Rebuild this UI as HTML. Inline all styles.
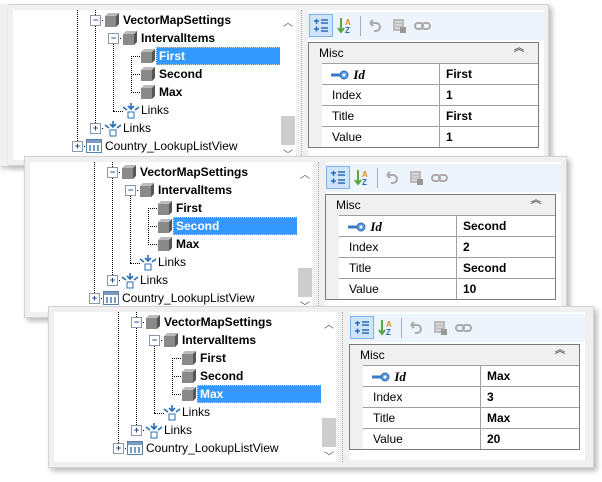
<!DOCTYPE html>
<html><head><meta charset="utf-8"><style>
body{margin:0;width:602px;height:482px;background:#fff;position:relative;overflow:hidden;font-family:"Liberation Sans",Tahoma,sans-serif;font-size:12px;color:#000}
.p{position:absolute;height:160px;background:#f0f0f0;border:1px solid #d4d4d4;box-shadow:3px 3px 5px rgba(0,0,0,.28)}
.tree{position:absolute;left:5px;top:5px;width:283px;height:150px;background:#fff;overflow:hidden}
.a{position:absolute}
.sb{position:absolute;left:267px;top:0;width:16px;height:150px;background:#fff}
.th{position:absolute;left:1px;top:106px;width:14px;height:29px;background:#cdcdcd}
.chev{position:absolute;left:3px;font-size:10px;color:#555}
.vl{position:absolute;border-left:1px dotted #000;width:0}
.hl{position:absolute;border-top:1px dotted #000;height:0}
.ex{position:absolute;width:9px;height:9px;border:1px solid #8a9aac;background:#fff;font-size:9px;line-height:9px;text-align:center;color:#2a4a8a;font-weight:bold}
.t{position:absolute;white-space:nowrap;line-height:16px}
.b{font-weight:bold}
.sel{background:#3399ff;color:#fff;border:1px dotted #bcd;}
.split{position:absolute;left:293px;top:5px;height:150px;border-left:1px dotted #aaa}
.rw{position:absolute;left:300px;top:5px;width:236px;height:148px;background:#fff}
.tb{position:absolute;left:0;top:2px;width:236px;height:28px;background:#eef4fb}
.grid{position:absolute;left:0;top:32px;width:229px;height:104px;border:1px solid #7a7a7a;background:#f0f0f0}
.row{position:absolute;left:13px;width:216px;height:20px;background:#fff;border-top:1px solid #a0a0a0}
.c1{position:absolute;left:10px;top:3px}
.c2{position:absolute;left:117px;top:0;height:20px;border-left:1px solid #a0a0a0;padding-left:6px;line-height:20px;font-weight:bold}
</style></head><body>

<div class="a" style="left:0;top:4px;width:12px;height:162px;background:#f0f0f0;box-shadow:0 3px 5px rgba(0,0,0,.2)"></div>

<div class="p" style="left:8px;top:4px;width:540px;border-left:none">
 <div class="tree">
  <div class="vl" style="left:64px;top:0;height:137px"></div>
  <div class="vl" style="left:82px;top:0;height:119px"></div>
  <div class="vl" style="left:100px;top:34px;height:67px"></div>
  <div class="hl" style="left:100px;top:101px;width:10px"></div>
  <div class="vl" style="left:118px;top:46px;height:37px"></div>
  <div class="hl" style="left:118px;top:46px;width:9px"></div>
  <div class="hl" style="left:118px;top:64px;width:9px"></div>
  <div class="hl" style="left:118px;top:82px;width:9px"></div>
  <div class="hl" style="left:82px;top:10px;width:8px"></div>
  <div class="hl" style="left:100px;top:28px;width:8px"></div>
  <div class="hl" style="left:82px;top:118px;width:8px"></div>
  <div class="hl" style="left:64px;top:136px;width:8px"></div>
  <div class="ex" style="left:77px;top:5px">−</div>
  <div class="ex" style="left:95px;top:23px">−</div>
  <div class="ex" style="left:77px;top:113px">+</div>
  <div class="ex" style="left:59px;top:131px">+</div>
  <svg class="a" style="left:91px;top:2px" width="16" height="16"><path d="M1 4 L4 1 H15 L12 4Z" fill="#bbb"/><rect x="1" y="4" width="11" height="11" fill="#8a8a8a"/><path d="M12 4 L15 1 V12 L12 15Z" fill="#555"/></svg>
  <svg class="a" style="left:109px;top:20px" width="16" height="16"><path d="M1 4 L4 1 H15 L12 4Z" fill="#bbb"/><rect x="1" y="4" width="11" height="11" fill="#8a8a8a"/><path d="M12 4 L15 1 V12 L12 15Z" fill="#555"/></svg>
  <svg class="a" style="left:127px;top:38px" width="16" height="16"><path d="M1 4 L4 1 H15 L12 4Z" fill="#bbb"/><rect x="1" y="4" width="11" height="11" fill="#8a8a8a"/><path d="M12 4 L15 1 V12 L12 15Z" fill="#555"/></svg>
  <svg class="a" style="left:127px;top:56px" width="16" height="16"><path d="M1 4 L4 1 H15 L12 4Z" fill="#bbb"/><rect x="1" y="4" width="11" height="11" fill="#8a8a8a"/><path d="M12 4 L15 1 V12 L12 15Z" fill="#555"/></svg>
  <svg class="a" style="left:127px;top:74px" width="16" height="16"><path d="M1 4 L4 1 H15 L12 4Z" fill="#bbb"/><rect x="1" y="4" width="11" height="11" fill="#8a8a8a"/><path d="M12 4 L15 1 V12 L12 15Z" fill="#555"/></svg>
  <svg class="a" style="left:109px;top:92px" width="18" height="18"><path d="M9 1V7M6 4L9 7L12 4M1 5L5 8M17 5L13 8" stroke="#2a6db5" stroke-width="1.6" fill="none"/><rect x="6" y="10" width="6" height="6" fill="#fff" stroke="#2a6db5"/></svg>
  <svg class="a" style="left:91px;top:110px" width="18" height="18"><path d="M9 1V7M6 4L9 7L12 4M1 5L5 8M17 5L13 8" stroke="#2a6db5" stroke-width="1.6" fill="none"/><rect x="6" y="10" width="6" height="6" fill="#fff" stroke="#2a6db5"/></svg>
  <svg class="a" style="left:73px;top:129px" width="16" height="14"><rect x="0.5" y="0.5" width="15" height="13" fill="#fff" stroke="#5a7fa8"/><rect x="1" y="1" width="14" height="3" fill="#7a9cc2"/><path d="M4 6V12M8 6V12M12 6V12" stroke="#7a9cc2" stroke-width="2"/></svg>
  <div class="t b" style="left:110px;top:2px">VectorMapSettings</div>
  <div class="t b" style="left:128px;top:20px">IntervalItems</div>
  <div class="t b sel" style="left:143px;top:37px;width:121px;padding-left:2px">First</div>
  <div class="t b" style="left:146px;top:56px">Second</div>
  <div class="t b" style="left:146px;top:74px">Max</div>
  <div class="t" style="left:128px;top:92px">Links</div>
  <div class="t" style="left:110px;top:110px">Links</div>
  <div class="t" style="left:92px;top:128px">Country_LookupListView</div>
  <div class="sb"><div class="chev" style="top:4px">︿</div><div class="th"></div><div class="chev" style="top:136px">﹀</div></div>
 </div>
 <div class="split"></div>
 <div class="rw">
  <div class="tb">
   <div class="a" style="left:1px;top:2px;width:22px;height:21px;background:#cfe3fb;border:1px solid #7fb0e8"></div>
   <svg class="a" style="left:5px;top:6px" width="16" height="16"><path d="M1 3H6M3.5 1V6M1 11H6M3.5 8.5V13.5M8 2H15M8 5H15M8 10H15M8 13H15" stroke="#2a6db5" stroke-width="1.4"/></svg>
   <svg class="a" style="left:29px;top:5px" width="16" height="18"><path d="M4 1V14M1 11L4 15L7 11" stroke="#5aa545" stroke-width="2" fill="none"/><text x="8" y="8" font-size="8" font-weight="bold" fill="#e08a20" font-family="Liberation Sans">A</text><text x="8" y="16" font-size="8" font-weight="bold" fill="#2a6db5" font-family="Liberation Sans">Z</text></svg>
   <div class="a" style="left:52px;top:4px;height:20px;border-left:1px solid #aab"></div>
   <svg class="a" style="left:60px;top:6px" width="14" height="16"><path d="M2 5H8A4 4 0 0 1 8 13H6M2 5L5 2M2 5L5 8" stroke="#aaa" stroke-width="2" fill="none"/></svg>
   <svg class="a" style="left:84px;top:6px" width="15" height="16"><rect x="1" y="1" width="11" height="12" fill="#bbb"/><path d="M3 4H10M3 7H10M3 10H10" stroke="#eee"/><rect x="8" y="9" width="6" height="6" fill="#999"/></svg>
   <svg class="a" style="left:106px;top:9px" width="17" height="10"><rect x="1" y="2" width="8" height="6" rx="3" fill="none" stroke="#aaa" stroke-width="2"/><rect x="8" y="2" width="8" height="6" rx="3" fill="none" stroke="#aaa" stroke-width="2"/></svg>
  </div>
  <div class="grid">
   <div class="a" style="left:0;top:0;width:229px;height:20px;background:#f0f0f0"><span class="c1" style="left:10px">Misc</span><span class="a" style="left:205px;top:2px;font-size:10px;color:#666;font-weight:bold;line-height:7px">︽</span></div>
   <div class="row" style="top:20px"><span class="c1" style="left:8px"><svg width="20" height="10" style="vertical-align:-1px"><path d="M1 5H12" stroke="#3a7ac8" stroke-width="3"/><circle cx="14" cy="5" r="4" fill="#5a9ae0" stroke="#2a6db5"/><circle cx="14" cy="5" r="1.5" fill="#fff"/></svg> <b><i style="font-family:'Liberation Serif',serif;font-size:13px">Id</i></b></span><span class="c2">First</span></div>
   <div class="row" style="top:41px"><span class="c1">Index</span><span class="c2">1</span></div>
   <div class="row" style="top:62px"><span class="c1">Title</span><span class="c2">First</span></div>
   <div class="row" style="top:83px"><span class="c1">Value</span><span class="c2">1</span></div>
  </div>
 </div>
</div>

<div class="p" style="left:24px;top:156px;width:541px">
 <div class="tree">
  <div class="vl" style="left:64px;top:0;height:137px"></div>
  <div class="vl" style="left:82px;top:0;height:119px"></div>
  <div class="vl" style="left:100px;top:34px;height:67px"></div>
  <div class="hl" style="left:100px;top:101px;width:10px"></div>
  <div class="vl" style="left:118px;top:46px;height:37px"></div>
  <div class="hl" style="left:118px;top:46px;width:9px"></div>
  <div class="hl" style="left:118px;top:64px;width:9px"></div>
  <div class="hl" style="left:118px;top:82px;width:9px"></div>
  <div class="hl" style="left:82px;top:10px;width:8px"></div>
  <div class="hl" style="left:100px;top:28px;width:8px"></div>
  <div class="hl" style="left:82px;top:118px;width:8px"></div>
  <div class="hl" style="left:64px;top:136px;width:8px"></div>
  <div class="ex" style="left:77px;top:5px">−</div>
  <div class="ex" style="left:95px;top:23px">−</div>
  <div class="ex" style="left:77px;top:113px">+</div>
  <div class="ex" style="left:59px;top:131px">+</div>
  <svg class="a" style="left:91px;top:2px" width="16" height="16"><path d="M1 4 L4 1 H15 L12 4Z" fill="#bbb"/><rect x="1" y="4" width="11" height="11" fill="#8a8a8a"/><path d="M12 4 L15 1 V12 L12 15Z" fill="#555"/></svg>
  <svg class="a" style="left:109px;top:20px" width="16" height="16"><path d="M1 4 L4 1 H15 L12 4Z" fill="#bbb"/><rect x="1" y="4" width="11" height="11" fill="#8a8a8a"/><path d="M12 4 L15 1 V12 L12 15Z" fill="#555"/></svg>
  <svg class="a" style="left:127px;top:38px" width="16" height="16"><path d="M1 4 L4 1 H15 L12 4Z" fill="#bbb"/><rect x="1" y="4" width="11" height="11" fill="#8a8a8a"/><path d="M12 4 L15 1 V12 L12 15Z" fill="#555"/></svg>
  <svg class="a" style="left:127px;top:56px" width="16" height="16"><path d="M1 4 L4 1 H15 L12 4Z" fill="#bbb"/><rect x="1" y="4" width="11" height="11" fill="#8a8a8a"/><path d="M12 4 L15 1 V12 L12 15Z" fill="#555"/></svg>
  <svg class="a" style="left:127px;top:74px" width="16" height="16"><path d="M1 4 L4 1 H15 L12 4Z" fill="#bbb"/><rect x="1" y="4" width="11" height="11" fill="#8a8a8a"/><path d="M12 4 L15 1 V12 L12 15Z" fill="#555"/></svg>
  <svg class="a" style="left:109px;top:92px" width="18" height="18"><path d="M9 1V7M6 4L9 7L12 4M1 5L5 8M17 5L13 8" stroke="#2a6db5" stroke-width="1.6" fill="none"/><rect x="6" y="10" width="6" height="6" fill="#fff" stroke="#2a6db5"/></svg>
  <svg class="a" style="left:91px;top:110px" width="18" height="18"><path d="M9 1V7M6 4L9 7L12 4M1 5L5 8M17 5L13 8" stroke="#2a6db5" stroke-width="1.6" fill="none"/><rect x="6" y="10" width="6" height="6" fill="#fff" stroke="#2a6db5"/></svg>
  <svg class="a" style="left:73px;top:129px" width="16" height="14"><rect x="0.5" y="0.5" width="15" height="13" fill="#fff" stroke="#5a7fa8"/><rect x="1" y="1" width="14" height="3" fill="#7a9cc2"/><path d="M4 6V12M8 6V12M12 6V12" stroke="#7a9cc2" stroke-width="2"/></svg>
  <div class="t b" style="left:110px;top:2px">VectorMapSettings</div>
  <div class="t b" style="left:128px;top:20px">IntervalItems</div>
  <div class="t b" style="left:146px;top:38px">First</div>
  <div class="t b sel" style="left:143px;top:55px;width:121px;padding-left:2px">Second</div>
  <div class="t b" style="left:146px;top:74px">Max</div>
  <div class="t" style="left:128px;top:92px">Links</div>
  <div class="t" style="left:110px;top:110px">Links</div>
  <div class="t" style="left:92px;top:128px">Country_LookupListView</div>
  <div class="sb"><div class="chev" style="top:4px">︿</div><div class="th"></div><div class="chev" style="top:136px">﹀</div></div>
 </div>
 <div class="split"></div>
 <div class="rw">
  <div class="tb">
   <div class="a" style="left:1px;top:2px;width:22px;height:21px;background:#cfe3fb;border:1px solid #7fb0e8"></div>
   <svg class="a" style="left:5px;top:6px" width="16" height="16"><path d="M1 3H6M3.5 1V6M1 11H6M3.5 8.5V13.5M8 2H15M8 5H15M8 10H15M8 13H15" stroke="#2a6db5" stroke-width="1.4"/></svg>
   <svg class="a" style="left:29px;top:5px" width="16" height="18"><path d="M4 1V14M1 11L4 15L7 11" stroke="#5aa545" stroke-width="2" fill="none"/><text x="8" y="8" font-size="8" font-weight="bold" fill="#e08a20" font-family="Liberation Sans">A</text><text x="8" y="16" font-size="8" font-weight="bold" fill="#2a6db5" font-family="Liberation Sans">Z</text></svg>
   <div class="a" style="left:52px;top:4px;height:20px;border-left:1px solid #aab"></div>
   <svg class="a" style="left:60px;top:6px" width="14" height="16"><path d="M2 5H8A4 4 0 0 1 8 13H6M2 5L5 2M2 5L5 8" stroke="#aaa" stroke-width="2" fill="none"/></svg>
   <svg class="a" style="left:84px;top:6px" width="15" height="16"><rect x="1" y="1" width="11" height="12" fill="#bbb"/><path d="M3 4H10M3 7H10M3 10H10" stroke="#eee"/><rect x="8" y="9" width="6" height="6" fill="#999"/></svg>
   <svg class="a" style="left:106px;top:9px" width="17" height="10"><rect x="1" y="2" width="8" height="6" rx="3" fill="none" stroke="#aaa" stroke-width="2"/><rect x="8" y="2" width="8" height="6" rx="3" fill="none" stroke="#aaa" stroke-width="2"/></svg>
  </div>
  <div class="grid">
   <div class="a" style="left:0;top:0;width:229px;height:20px;background:#f0f0f0"><span class="c1" style="left:10px">Misc</span><span class="a" style="left:205px;top:2px;font-size:10px;color:#666;font-weight:bold;line-height:7px">︽</span></div>
   <div class="row" style="top:20px"><span class="c1" style="left:8px"><svg width="20" height="10" style="vertical-align:-1px"><path d="M1 5H12" stroke="#3a7ac8" stroke-width="3"/><circle cx="14" cy="5" r="4" fill="#5a9ae0" stroke="#2a6db5"/><circle cx="14" cy="5" r="1.5" fill="#fff"/></svg> <b><i style="font-family:'Liberation Serif',serif;font-size:13px">Id</i></b></span><span class="c2">Second</span></div>
   <div class="row" style="top:41px"><span class="c1">Index</span><span class="c2">2</span></div>
   <div class="row" style="top:62px"><span class="c1">Title</span><span class="c2">Second</span></div>
   <div class="row" style="top:83px"><span class="c1">Value</span><span class="c2">10</span></div>
  </div>
 </div>
</div>

<div class="p" style="left:48px;top:306px;width:544px">
 <div class="tree">
  <div class="vl" style="left:64px;top:0;height:137px"></div>
  <div class="vl" style="left:82px;top:0;height:119px"></div>
  <div class="vl" style="left:100px;top:34px;height:67px"></div>
  <div class="hl" style="left:100px;top:101px;width:10px"></div>
  <div class="vl" style="left:118px;top:46px;height:37px"></div>
  <div class="hl" style="left:118px;top:46px;width:9px"></div>
  <div class="hl" style="left:118px;top:64px;width:9px"></div>
  <div class="hl" style="left:118px;top:82px;width:9px"></div>
  <div class="hl" style="left:82px;top:10px;width:8px"></div>
  <div class="hl" style="left:100px;top:28px;width:8px"></div>
  <div class="hl" style="left:82px;top:118px;width:8px"></div>
  <div class="hl" style="left:64px;top:136px;width:8px"></div>
  <div class="ex" style="left:77px;top:5px">−</div>
  <div class="ex" style="left:95px;top:23px">−</div>
  <div class="ex" style="left:77px;top:113px">+</div>
  <div class="ex" style="left:59px;top:131px">+</div>
  <svg class="a" style="left:91px;top:2px" width="16" height="16"><path d="M1 4 L4 1 H15 L12 4Z" fill="#bbb"/><rect x="1" y="4" width="11" height="11" fill="#8a8a8a"/><path d="M12 4 L15 1 V12 L12 15Z" fill="#555"/></svg>
  <svg class="a" style="left:109px;top:20px" width="16" height="16"><path d="M1 4 L4 1 H15 L12 4Z" fill="#bbb"/><rect x="1" y="4" width="11" height="11" fill="#8a8a8a"/><path d="M12 4 L15 1 V12 L12 15Z" fill="#555"/></svg>
  <svg class="a" style="left:127px;top:38px" width="16" height="16"><path d="M1 4 L4 1 H15 L12 4Z" fill="#bbb"/><rect x="1" y="4" width="11" height="11" fill="#8a8a8a"/><path d="M12 4 L15 1 V12 L12 15Z" fill="#555"/></svg>
  <svg class="a" style="left:127px;top:56px" width="16" height="16"><path d="M1 4 L4 1 H15 L12 4Z" fill="#bbb"/><rect x="1" y="4" width="11" height="11" fill="#8a8a8a"/><path d="M12 4 L15 1 V12 L12 15Z" fill="#555"/></svg>
  <svg class="a" style="left:127px;top:74px" width="16" height="16"><path d="M1 4 L4 1 H15 L12 4Z" fill="#bbb"/><rect x="1" y="4" width="11" height="11" fill="#8a8a8a"/><path d="M12 4 L15 1 V12 L12 15Z" fill="#555"/></svg>
  <svg class="a" style="left:109px;top:92px" width="18" height="18"><path d="M9 1V7M6 4L9 7L12 4M1 5L5 8M17 5L13 8" stroke="#2a6db5" stroke-width="1.6" fill="none"/><rect x="6" y="10" width="6" height="6" fill="#fff" stroke="#2a6db5"/></svg>
  <svg class="a" style="left:91px;top:110px" width="18" height="18"><path d="M9 1V7M6 4L9 7L12 4M1 5L5 8M17 5L13 8" stroke="#2a6db5" stroke-width="1.6" fill="none"/><rect x="6" y="10" width="6" height="6" fill="#fff" stroke="#2a6db5"/></svg>
  <svg class="a" style="left:73px;top:129px" width="16" height="14"><rect x="0.5" y="0.5" width="15" height="13" fill="#fff" stroke="#5a7fa8"/><rect x="1" y="1" width="14" height="3" fill="#7a9cc2"/><path d="M4 6V12M8 6V12M12 6V12" stroke="#7a9cc2" stroke-width="2"/></svg>
  <div class="t b" style="left:110px;top:2px">VectorMapSettings</div>
  <div class="t b" style="left:128px;top:20px">IntervalItems</div>
  <div class="t b" style="left:146px;top:38px">First</div>
  <div class="t b" style="left:146px;top:56px">Second</div>
  <div class="t b sel" style="left:143px;top:73px;width:121px;padding-left:2px">Max</div>
  <div class="t" style="left:128px;top:92px">Links</div>
  <div class="t" style="left:110px;top:110px">Links</div>
  <div class="t" style="left:92px;top:128px">Country_LookupListView</div>
  <div class="sb"><div class="chev" style="top:4px">︿</div><div class="th"></div><div class="chev" style="top:136px">﹀</div></div>
 </div>
 <div class="split"></div>
 <div class="rw">
  <div class="tb">
   <div class="a" style="left:1px;top:2px;width:22px;height:21px;background:#cfe3fb;border:1px solid #7fb0e8"></div>
   <svg class="a" style="left:5px;top:6px" width="16" height="16"><path d="M1 3H6M3.5 1V6M1 11H6M3.5 8.5V13.5M8 2H15M8 5H15M8 10H15M8 13H15" stroke="#2a6db5" stroke-width="1.4"/></svg>
   <svg class="a" style="left:29px;top:5px" width="16" height="18"><path d="M4 1V14M1 11L4 15L7 11" stroke="#5aa545" stroke-width="2" fill="none"/><text x="8" y="8" font-size="8" font-weight="bold" fill="#e08a20" font-family="Liberation Sans">A</text><text x="8" y="16" font-size="8" font-weight="bold" fill="#2a6db5" font-family="Liberation Sans">Z</text></svg>
   <div class="a" style="left:52px;top:4px;height:20px;border-left:1px solid #aab"></div>
   <svg class="a" style="left:60px;top:6px" width="14" height="16"><path d="M2 5H8A4 4 0 0 1 8 13H6M2 5L5 2M2 5L5 8" stroke="#aaa" stroke-width="2" fill="none"/></svg>
   <svg class="a" style="left:84px;top:6px" width="15" height="16"><rect x="1" y="1" width="11" height="12" fill="#bbb"/><path d="M3 4H10M3 7H10M3 10H10" stroke="#eee"/><rect x="8" y="9" width="6" height="6" fill="#999"/></svg>
   <svg class="a" style="left:106px;top:9px" width="17" height="10"><rect x="1" y="2" width="8" height="6" rx="3" fill="none" stroke="#aaa" stroke-width="2"/><rect x="8" y="2" width="8" height="6" rx="3" fill="none" stroke="#aaa" stroke-width="2"/></svg>
  </div>
  <div class="grid">
   <div class="a" style="left:0;top:0;width:229px;height:20px;background:#f0f0f0"><span class="c1" style="left:10px">Misc</span><span class="a" style="left:205px;top:2px;font-size:10px;color:#666;font-weight:bold;line-height:7px">︽</span></div>
   <div class="row" style="top:20px"><span class="c1" style="left:8px"><svg width="20" height="10" style="vertical-align:-1px"><path d="M1 5H12" stroke="#3a7ac8" stroke-width="3"/><circle cx="14" cy="5" r="4" fill="#5a9ae0" stroke="#2a6db5"/><circle cx="14" cy="5" r="1.5" fill="#fff"/></svg> <b><i style="font-family:'Liberation Serif',serif;font-size:13px">Id</i></b></span><span class="c2">Max</span></div>
   <div class="row" style="top:41px"><span class="c1">Index</span><span class="c2">3</span></div>
   <div class="row" style="top:62px"><span class="c1">Title</span><span class="c2">Max</span></div>
   <div class="row" style="top:83px"><span class="c1">Value</span><span class="c2">20</span></div>
  </div>
 </div>
</div>
</body></html>
